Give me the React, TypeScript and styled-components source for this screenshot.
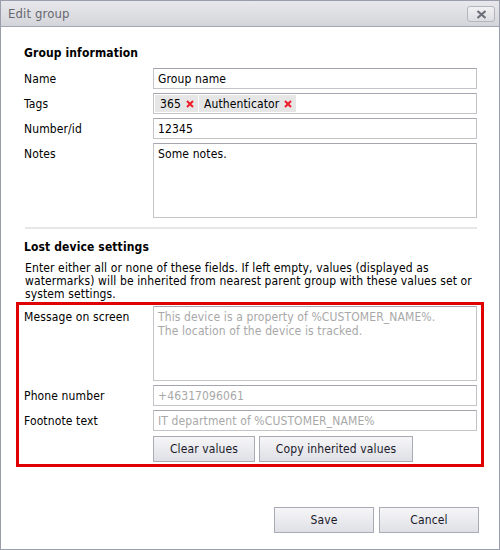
import React from "react";
import styled, { createGlobalStyle } from "styled-components";

const Global = createGlobalStyle`
  html, body { margin: 0; padding: 0; background: #ffffff; }
  * { box-sizing: border-box; }
  body { font-family: "DejaVu Sans Condensed", "DejaVu Sans", sans-serif; font-size: 12px; color: #000; letter-spacing: 0.12px; }
`;

const Window = styled.div`
  width: 500px;
  height: 550px;
  border: 1px solid #9a9daa;
  display: flex;
  flex-direction: column;
  background: #fff;
`;

const TitleBar = styled.div`
  height: 26px;
  flex: none;
  display: flex;
  align-items: center;
  justify-content: space-between;
  padding: 0 4px 0 7px;
  background: linear-gradient(#e8e8ec, #d4d5da);
  border-bottom: 1px solid #a3a5b0;
  color: #666870;
  font-size: 13px;
`;

const CloseButton = styled.button`
  width: 28px;
  height: 16px;
  padding: 0;
  border: 1px solid #b4b6be;
  border-radius: 3px;
  background: linear-gradient(#f2f2f4, #dcdde2);
  display: flex;
  align-items: center;
  justify-content: center;
  margin-top: 1px;
`;

const Body = styled.div`
  flex: 1;
  display: flex;
  flex-direction: column;
  padding: 19px 22px 16px 23px;
`;

const SectionTitle = styled.div`
  font-weight: bold;
  font-size: 12px;
  margin: 0 0 8px 0;
  line-height: 14px;
`;

const Row = styled.div<{ $gap?: number }>`
  display: grid;
  grid-template-columns: 129px 324px;
  align-items: start;
  margin-bottom: ${(p) => p.$gap ?? 4}px;
`;

const Label = styled.div`
  padding-top: 4px;
  line-height: 14px;
`;

const Input = styled.div<{ $placeholder?: boolean }>`
  height: 21px;
  border: 1px solid #c4c4c8;
  border-top-color: #a4a6b0;
  padding: 3px 4px 0 4px;
  line-height: 14px;
  color: ${(p) => (p.$placeholder ? "#a8a8a8" : "#000")};
  white-space: nowrap;
`;

const TextArea = styled(Input)<{ $h: number }>`
  height: ${(p) => p.$h}px;
  white-space: normal;
  padding-top: 3px;
`;

const TagBox = styled(Input)`
  display: flex;
  align-items: center;
  gap: 1px;
  padding: 1px 1px;
`;

const Tag = styled.span`
  height: 17px;
  display: inline-flex;
  align-items: center;
  gap: 5px;
  padding: 0 4px 0 5px;
  background: #e6e6e6;
  line-height: 14px;
`;

const TagX = styled.svg`
  width: 8px;
  height: 8px;
  flex: none;
`;

const Divider = styled.div`
  height: 2px;
  background: #e6e6e6;
  margin: 9px 0 11px 1px;
  width: 452px;
`;

const Para = styled.div`
  line-height: 13px;
  margin: 0 0 1px 1px;
  width: 455px;
`;

const Highlight = styled.div`
  margin: 0 -7px 0 -8px;
  border: 3px solid #e00000;
  padding: 1px 5px 3px 5px;
  height: 165px;
`;

const ButtonRow = styled.div`
  display: flex;
  gap: 4px;
  padding-top: 1px;
`;

const Button = styled.button<{ $w: number }>`
  width: ${(p) => p.$w}px;
  height: 26px;
  border: 1px solid #a8aab4;
  background: linear-gradient(#f6f6f8, #dfe0e6);
  font-family: inherit;
  font-size: 12px;
  letter-spacing: 0.12px;
  color: #1a1a2a;
  padding: 0;
`;

const Footer = styled.div`
  margin-top: auto;
  margin-right: -2px;
  display: flex;
  justify-content: flex-end;
  gap: 5px;
`;

const Cross = () => (
  <TagX viewBox="0 0 8 8">
    <path d="M1 1 L7 7 M7 1 L1 7" stroke="#ee1c24" strokeWidth="2" />
  </TagX>
);

export default function App() {
  return (
    <>
      <Global />
      <Window>
        <TitleBar>
          <span>Edit group</span>
          <CloseButton aria-label="Close">
            <svg width="11" height="9" viewBox="0 0 11 9">
              <path d="M1.5 1 L9.5 8 M9.5 1 L1.5 8" stroke="#6c6e78" strokeWidth="2.2" />
            </svg>
          </CloseButton>
        </TitleBar>
        <Body>
          <SectionTitle>Group information</SectionTitle>
          <Row>
            <Label>Name</Label>
            <Input>Group name</Input>
          </Row>
          <Row>
            <Label>Tags</Label>
            <TagBox>
              <Tag>
                365 <Cross />
              </Tag>
              <Tag>
                Authenticator <Cross />
              </Tag>
            </TagBox>
          </Row>
          <Row>
            <Label>Number/id</Label>
            <Input>12345</Input>
          </Row>
          <Row $gap={0}>
            <Label>Notes</Label>
            <TextArea $h={75}>Some notes.</TextArea>
          </Row>
          <Divider />
          <SectionTitle>Lost device settings</SectionTitle>
          <Para>
            Enter either all or none of these fields. If left empty, values (displayed as
            watermarks) will be inherited from nearest parent group with these values set or
            system settings.
          </Para>
          <Highlight>
            <Row>
              <Label>Message on screen</Label>
              <TextArea $h={75} $placeholder>
                This device is a property of %CUSTOMER_NAME%.
                <br />
                The location of the device is tracked.
              </TextArea>
            </Row>
            <Row>
              <Label>Phone number</Label>
              <Input $placeholder>+46317096061</Input>
            </Row>
            <Row>
              <Label>Footnote text</Label>
              <Input $placeholder>IT department of %CUSTOMER_NAME%</Input>
            </Row>
            <Row $gap={0}>
              <div />
              <ButtonRow>
                <Button $w={102}>Clear values</Button>
                <Button $w={154}>Copy inherited values</Button>
              </ButtonRow>
            </Row>
          </Highlight>
          <Footer>
            <Button $w={100}>Save</Button>
            <Button $w={100}>Cancel</Button>
          </Footer>
        </Body>
      </Window>
    </>
  );
}
